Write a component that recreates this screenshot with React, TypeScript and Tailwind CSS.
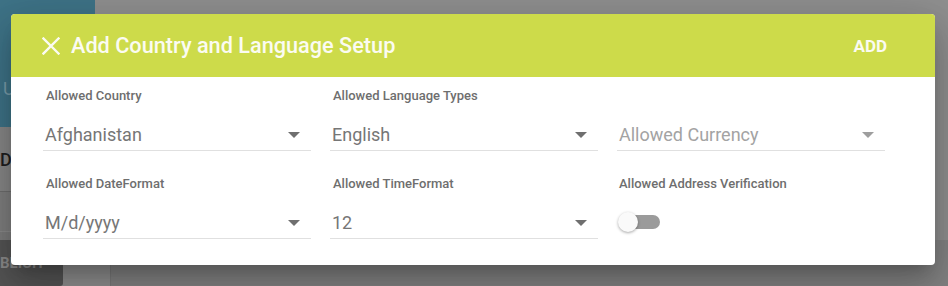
import React from "react";

function Arrow({ light }: { light?: boolean }) {
  return (
    <svg width="12" height="6" viewBox="0 0 12 6" className="shrink-0">
      <path d="M0 0 L12 0 L6 6 Z" fill={light ? "#9e9e9e" : "#6f6f6f"} />
    </svg>
  );
}

function SelectField({ label, value, placeholder }: { label?: string; value?: string; placeholder?: string }) {
  return (
    <div className="flex flex-col">
      <div className="h-4 pl-[3px] text-[13px] leading-4 font-medium text-[#6e6e6e]">{label ?? ""}</div>
      <div className="mt-[19px] flex items-center justify-between border-b border-[#e0e0e0] pb-[3px] pl-[2px] pr-[11px]">
        <span className={`text-[18px] leading-6 ${placeholder ? "text-[#a3a3a3]" : "text-[#767676]"}`}>
          {value ?? placeholder}
        </span>
        <Arrow light={!!placeholder} />
      </div>
    </div>
  );
}

function ToggleField({ label }: { label: string }) {
  return (
    <div className="flex flex-col">
      <div className="h-4 pl-[2px] text-[13px] leading-4 font-medium text-[#6e6e6e]">{label}</div>
      <div className="mt-[18px] flex h-[24px] items-center">
        <div className="relative ml-[1px] h-[20px] w-[44px]">
          <div className="absolute left-[9px] top-[3px] h-[14px] w-[33px] rounded-full bg-[#9b9b9b]" />
          <div className="absolute left-0 top-0 h-[20px] w-[20px] rounded-full bg-[#fafafa] shadow-[0_1px_3px_rgba(0,0,0,0.35)]" />
        </div>
      </div>
    </div>
  );
}

export default function App() {
  return (
    <div
      className="relative h-[286px] w-[948px] overflow-hidden bg-[#8f8f8f]"
      style={{ fontFamily: "Roboto, 'Liberation Sans', sans-serif" }}
    >
      {/* background app (dimmed) */}
      <div className="flex h-full">
        <div className="flex w-[95px] flex-col">
          <div className="flex h-[127px] items-end bg-[#3e7387] pb-[26px] pl-[3px]">
            <span className="text-[18px] leading-6 text-[#7a9eab]">U</span>
          </div>
          <div className="h-[65px] border-b border-[#6e6e6e] bg-[#878787] pt-[22px]">
            <span className="text-[18px] font-medium leading-5 text-[#1e1e1e]">D</span>
          </div>
          <div className="h-[40px] border-b border-[#8a8a8a] bg-[#7f7f7f]" />
          <div className="h-[8px] bg-[#7c7c7c]" />
          <div className="flex h-[46px] w-[63px] items-start rounded-br-[3px] bg-[#555555] pt-[13px]">
            <span className="text-[15px] font-bold leading-5 text-[#8a8a8a]">BLICH</span>
          </div>
        </div>
        <div className="flex flex-1 flex-col">
          <div className="h-[240px]" />
          <div className="ml-[15px] flex-1 border-l border-[#7a7a7a] bg-[#838383]" />
        </div>
      </div>

      {/* modal */}
      <div className="absolute left-[11px] top-[14px] w-[924px] overflow-hidden rounded-[4px] bg-white shadow-[0_11px_15px_-7px_rgba(0,0,0,0.2),0_24px_38px_3px_rgba(0,0,0,0.14),0_9px_46px_8px_rgba(0,0,0,0.12)]">
        <div className="flex h-[63px] items-center justify-between bg-[#cddb4a] pl-[31px] pr-[48px]">
          <div className="flex items-center">
            <svg width="18" height="18" viewBox="0 0 18 18" className="mt-[1px]">
              <path d="M1.5 1.5 L16.5 16.5 M16.5 1.5 L1.5 16.5" stroke="#fbfbf2" strokeWidth="2.4" strokeLinecap="square" />
            </svg>
            <span className="ml-[11px] text-[21.7px] font-medium leading-6 text-[#fbfbf2]">
              Add Country and Language Setup
            </span>
          </div>
          <span className="text-[17px] font-bold leading-6 text-[#fbfbf2]">ADD</span>
        </div>
        <div className="grid grid-cols-[268px_268px_268px] gap-x-[19px] gap-y-[25px] pb-[26px] pl-[32px] pt-[11px]">
          <SelectField label="Allowed Country" value="Afghanistan" />
          <SelectField label="Allowed Language Types" value="English" />
          <SelectField placeholder="Allowed Currency" />
          <SelectField label="Allowed DateFormat" value="M/d/yyyy" />
          <SelectField label="Allowed TimeFormat" value="12" />
          <ToggleField label="Allowed Address Verification" />
        </div>
      </div>
    </div>
  );
}
